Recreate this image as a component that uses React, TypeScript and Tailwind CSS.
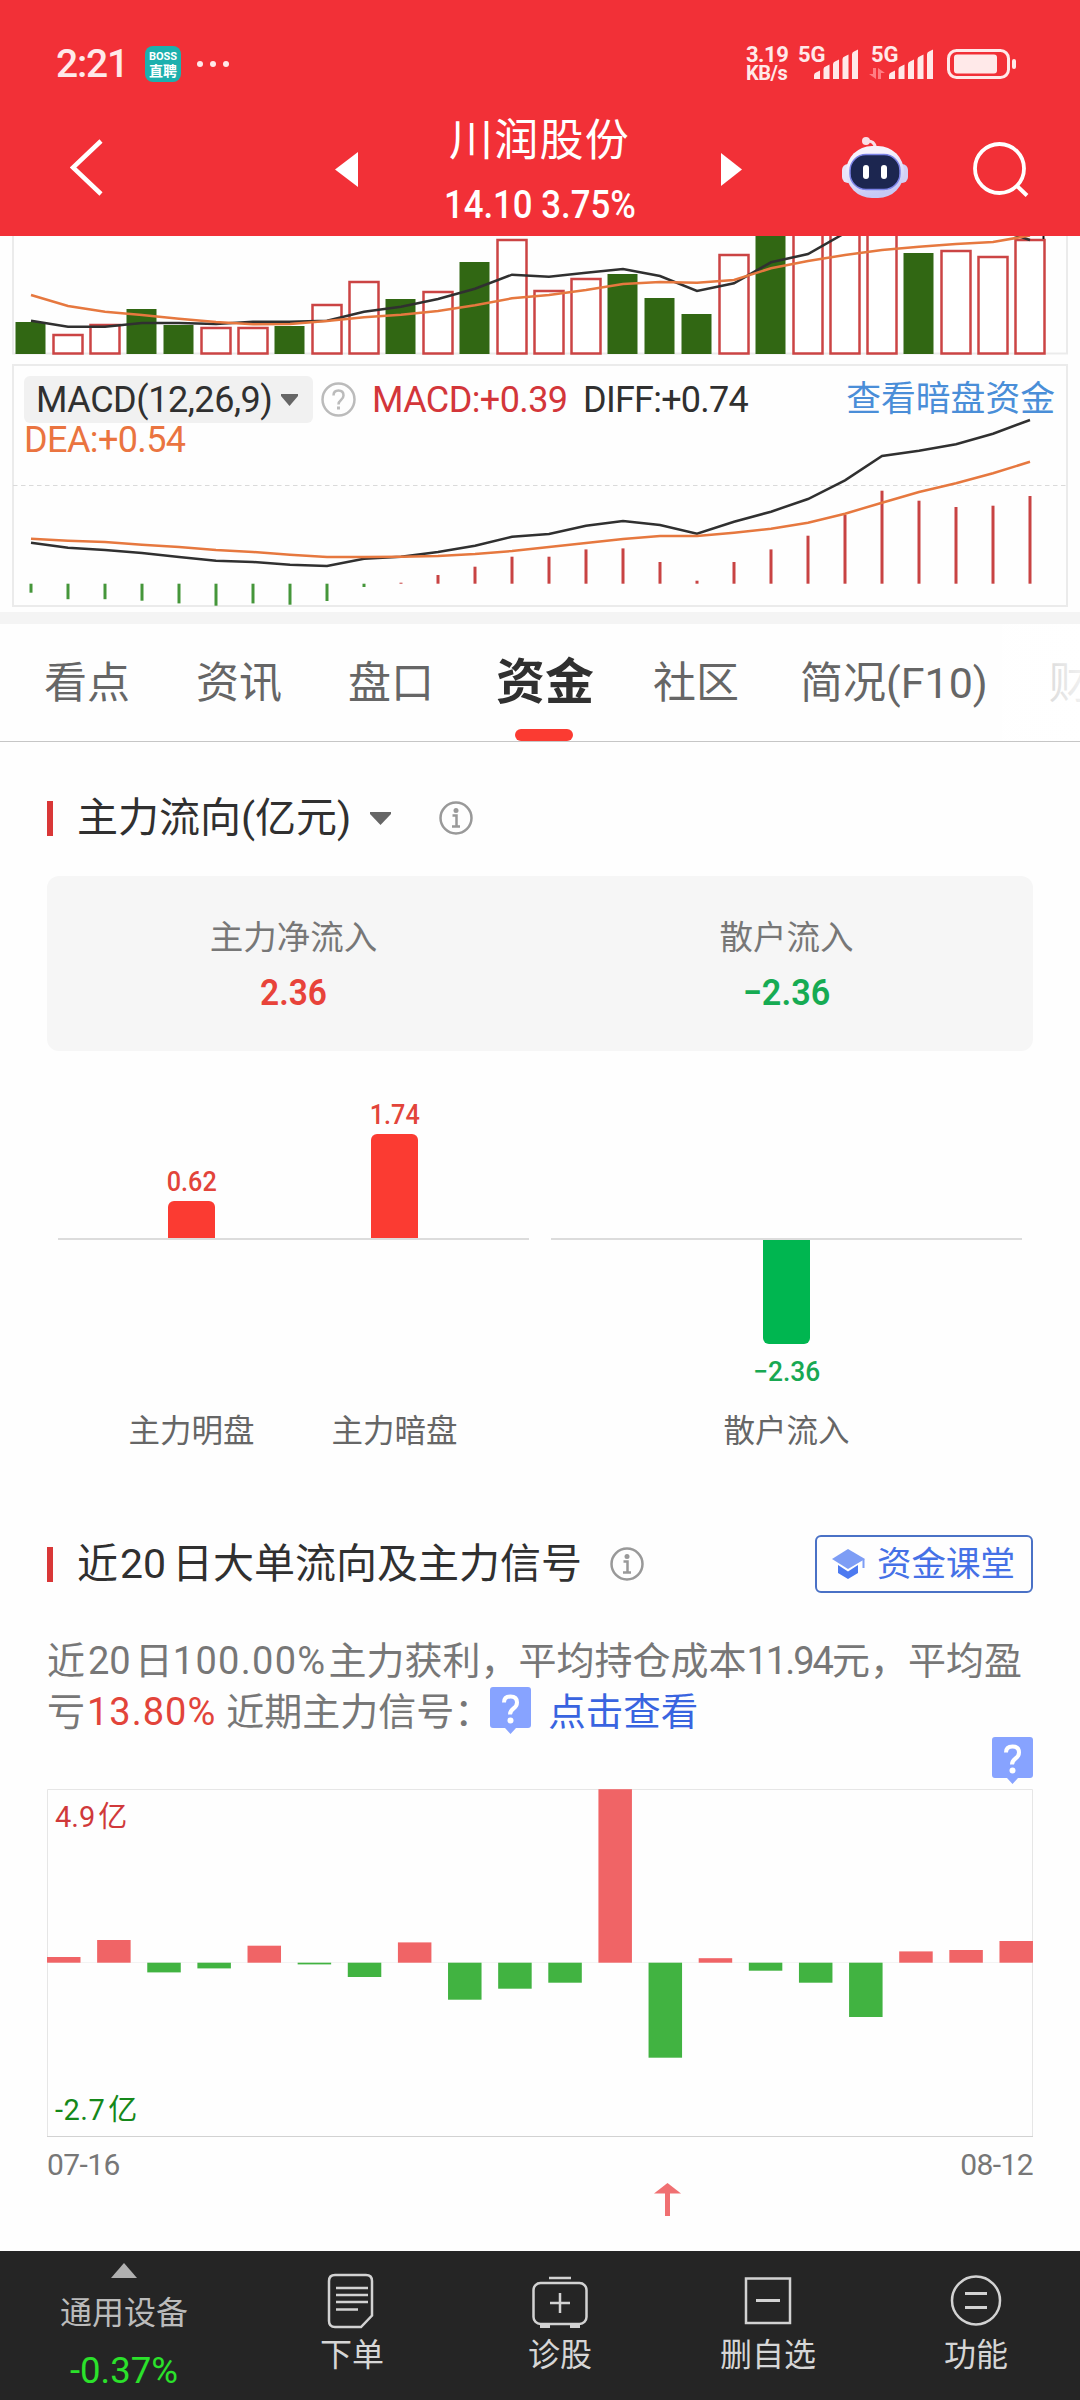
import type { ReactNode } from "react"

const X0 = 31
const STEP = 37

// y of the bar top and whether it is a rising (outlined) bar
const volumes = [
  { y: 322, up: false },
  { y: 335, up: true },
  { y: 325, up: true },
  { y: 309, up: false },
  { y: 325, up: false },
  { y: 328, up: true },
  { y: 328, up: true },
  { y: 326, up: false },
  { y: 305, up: true },
  { y: 282, up: true },
  { y: 299, up: false },
  { y: 292, up: true },
  { y: 262, up: false },
  { y: 240, up: true },
  { y: 291, up: true },
  { y: 279, up: true },
  { y: 274, up: false },
  { y: 298, up: false },
  { y: 314, up: false },
  { y: 255, up: true },
  { y: 220, up: false },
  { y: 220, up: true },
  { y: 220, up: true },
  { y: 220, up: true },
  { y: 253, up: false },
  { y: 251, up: true },
  { y: 257, up: true },
  { y: 240, up: true },
]

const volumeFast = [
  320.7, 326.7, 326.7, 323, 323, 324, 321.7, 321.7, 320.7, 311.7, 306.7, 299, 288.7, 274.7, 276.7, 272.7, 269, 276,
  291, 283.3, 262.3, 254, 233, 210, 205, 215, 228, 240,
]
const volumeSlow = [
  295, 306, 311.7, 315, 318.7, 322, 324.3, 324, 321, 317.3, 314.7, 311, 305.3, 298.3, 295, 290, 284, 282, 282.7, 280,
  268.3, 261, 255, 250, 246.7, 244, 242, 235.5,
]
const diff = [
  542.7, 547.7, 550, 553, 557, 560.7, 562, 564.7, 566, 558.7, 556.7, 552, 545.7, 536.7, 534, 525.7, 521, 525, 533.7,
  521.7, 511.7, 499, 480.3, 456, 450.7, 444.3, 433.7, 420,
]
const dea = [
  538.7, 540.7, 542, 544.7, 547, 550, 552, 554.7, 557, 557, 556.7, 556, 554, 551, 547, 543, 539, 536, 536, 532.7,
  528.7, 522.7, 513.7, 502.7, 492, 483.3, 473.3, 461.7,
]
const macd = [
  -9, -15.5, -15.5, -17, -19.7, -22, -19.7, -21, -17.3, -3.3, 1, 8.7, 17, 27, 27, 34.3, 35.3, 21.7, 3, 21.7, 34.3, 48,
  68.7, 93, 83, 76.7, 78, 87.7,
]

const flows = [
  5.7, 22.7, -9.7, -5.7, 17, -1.7, -14.3, 20.3, -37, -26, -20, 173.5, -95, 4.5, -8, -20, -54.3, 11.3, 12.7, 21.7,
]

const tabs = ["看点", "资讯", "盘口", "资金", "社区", "简况(F10)", "财"]

const toPoints = (values: number[]) => values.map((y, i) => `${X0 + i * STEP},${y}`).join(" ")

function Signal() {
  return (
    <svg width="44" height="30" viewBox="0 0 44 30" fill="#ffe9e9">
      <path d="M0 30V26q0-2 3-3l3-1.500V30z" />
      <path d="M9.500 30V20q0-2 3-3l3-1.500V30z" />
      <path d="M19 30V15q0-2 3-3l3-1.500V30z" />
      <path d="M28.500 30V10q0-2 3-3l3-1.500V30z" />
      <path d="M38 30V5q0-2 3-3l3-1.500V30z" />
    </svg>
  )
}

function StatusBar() {
  return (
    <div className="flex h-[110px] items-center pt-[18px] pl-[56px] text-[#ffe9e9]">
      <div className="w-[89px] text-[39px] leading-none font-medium tracking-[-1.200px]">2:21</div>
      <div className="flex h-9 w-9 flex-col items-center justify-center rounded-lg bg-[#1cb0ae] text-white">
        <span className="text-[11px] leading-[13px] font-bold">BOSS</span>
        <span className="text-[14px] leading-[16px] font-bold">直聘</span>
      </div>
      <div className="ml-4 flex gap-[7px]">
        <i className="h-1.5 w-1.5 rounded-full bg-[#ffe9e9]" />
        <i className="h-1.5 w-1.5 rounded-full bg-[#ffe9e9]" />
        <i className="h-1.5 w-1.5 rounded-full bg-[#ffe9e9]" />
      </div>
      <div className="ml-[517px] w-[52px] text-[22px] leading-[18px] font-bold tracking-[-0.500px]">
        <div>3.19</div>
        <div className="text-[20px]">KB/s</div>
      </div>
      <div className="relative flex h-9 w-[60px] items-end justify-end pb-[3px]">
        <span className="absolute top-0 left-0 text-[22px] leading-[18px] font-bold">5G</span>
        <Signal />
      </div>
      <div className="relative ml-[13px] flex h-9 w-[62px] items-end justify-end pb-[3px]">
        <span className="absolute top-0 left-0 text-[22px] leading-[18px] font-bold">5G</span>
        <svg className="absolute bottom-[3px] left-[-2px]" width="16" height="11" viewBox="0 0 16 11" fill="#ff7d82">
          <path d="M4 0h3v11L0 6h4zM9 11V0l7 5h-4v6z" />
        </svg>
        <Signal />
      </div>
      <svg className="ml-[14px]" width="70" height="30" viewBox="0 0 70 30">
        <rect x="1.500" y="1.500" width="60" height="27" rx="8" fill="none" stroke="#ffe9e9" strokeWidth="3" />
        <rect x="7" y="5.500" width="43" height="19" rx="3" fill="#ffe9e9" />
        <rect x="65" y="10" width="4" height="10" rx="2" fill="#ffe9e9" />
      </svg>
    </div>
  )
}

function Robot() {
  return (
    <svg className="mt-[27px] ml-[100px]" width="66" height="62" viewBox="0 0 66 62">
      <defs>
        <linearGradient id="shell" x1="0" y1="0" x2="0.3" y2="1">
          <stop offset="0.3" stopColor="#f6f2fc" />
          <stop offset="1" stopColor="#c6c9f5" />
        </linearGradient>
      </defs>
      <path d="M24 4q9-1 9.500 8" fill="none" stroke="#f9dfe8" strokeWidth="3" />
      <circle cx="24" cy="4" r="4" fill="#f9dfe8" />
      <rect x="0" y="27" width="12" height="19" rx="6" fill="#e9e4f8" />
      <rect x="54" y="27" width="12" height="19" rx="6" fill="#d3d0f4" />
      <rect x="4" y="9" width="58" height="52" rx="26" fill="url(#shell)" />
      <rect x="8" y="17.500" width="50" height="35" rx="16" fill="#1c2650" stroke="#7c83e6" strokeWidth="1.500" />
      <rect x="21" y="28" width="6" height="14" rx="3" fill="#fff" />
      <rect x="39" y="28" width="6" height="14" rx="3" fill="#fff" />
    </svg>
  )
}

function NavBar() {
  return (
    <div className="flex h-[126px] items-start pl-[70px] text-white">
      <svg className="mt-[28px]" width="33" height="60" viewBox="0 0 33 60">
        <path d="M31 3L3 29.500L31 56" fill="none" stroke="#fff" strokeWidth="4.500" />
      </svg>
      <svg className="mt-[42px] ml-[232px]" width="23" height="35" viewBox="0 0 23 35">
        <path d="M0 17.500L23 0V35z" fill="#fff" />
      </svg>
      <div className="flex w-[363px] flex-col items-center">
        <div className="mt-[2px] text-[44px] leading-[58px] tracking-[1.200px]">川润股份</div>
        <div className="mt-[5px] scale-x-[.915] text-[38px] leading-[60px] font-medium whitespace-nowrap">
          14.10 3.75%
        </div>
      </div>
      <svg className="mt-[43px]" width="21" height="33" viewBox="0 0 21 33">
        <path d="M21 16.500L0 0V33z" fill="#fff" />
      </svg>
      <Robot />
      <svg className="mt-[31px] ml-[65px]" width="56" height="56" viewBox="0 0 56 56" fill="none" stroke="#fff">
        <circle cx="26.500" cy="27.500" r="24.500" strokeWidth="3.800" />
        <path d="M44 45L54 54.500" strokeWidth="4" />
      </svg>
    </div>
  )
}

function StockCharts() {
  return (
    <div className="relative h-[376px]">
      <svg className="block" width="1080" height="376" viewBox="0 236 1080 376">
        <path d="M13 236V353.500H1067V236" fill="none" stroke="#ebebeb" strokeWidth="2" />
        {volumes.map((v, i) =>
          v.up ? (
            <rect
              key={i}
              x={X0 + i * STEP - 14.5}
              y={v.y}
              width="29"
              height={353.5 - v.y}
              fill="#fff"
              stroke="#cb4444"
              strokeWidth="2.500"
            />
          ) : (
            <rect key={i} x={X0 + i * STEP - 15.5} y={v.y} width="30" height={354 - v.y} fill="#316713" />
          ),
        )}
        <polyline points={toPoints(volumeFast)} fill="none" stroke="#303030" strokeWidth="2.500" />
        <polyline points={toPoints(volumeSlow)} fill="none" stroke="#e6783f" strokeWidth="2.500" />
        <path d="M1043.500 236v3" stroke="#111" strokeWidth="2" />

        <rect x="13" y="365" width="1054" height="241" fill="none" stroke="#ebebeb" strokeWidth="2" />
        <path d="M13 485.500H1066" stroke="#dadada" strokeWidth="1" strokeDasharray="4.500 3.500" />
        {macd.map((m, i) => (
          <rect
            key={i}
            x={X0 + i * STEP - 1.5}
            y={m > 0 ? 583.7 - m : 583.7}
            width="3"
            height={Math.abs(m)}
            fill={m > 0 ? "#c84343" : "#45963a"}
          />
        ))}
        <polyline points={toPoints(diff)} fill="none" stroke="#303030" strokeWidth="2.500" />
        <polyline points={toPoints(dea)} fill="none" stroke="#e6783f" strokeWidth="2.500" />
      </svg>

      <div className="absolute top-[140px] left-6 right-[25px] flex h-[47px] items-center text-[36px] leading-none whitespace-nowrap">
        <div className="flex h-[47px] w-[289px] items-center justify-between rounded-md bg-[#f1f1f1] pr-[15px] pl-3 text-[#303030]">
          <span className="tracking-[-0.450px]">MACD(12,26,9)</span>
          <svg width="17" height="12" viewBox="0 0 17 12">
            <path d="M0 0H17V2L8.500 12L0 2z" fill="#666" />
          </svg>
        </div>
        <svg className="ml-2" width="35" height="35" viewBox="0 0 35 35" fill="none" stroke="#bbb">
          <circle cx="17.500" cy="17.500" r="16" strokeWidth="2.500" />
          <path d="M12.500 13.500q0-5 5-5t5 5q0 2.500-2.500 4.500t-2.500 4.500" strokeWidth="2.500" />
          <path d="M17.500 24.500v3" strokeWidth="3" />
        </svg>
        <span className="ml-4 w-[211px] tracking-[-0.600px] text-[#d3363a]">MACD:+0.39</span>
        <span className="tracking-[-0.750px] text-[#303030]">DIFF:+0.74</span>
        <span className="ml-auto text-[34.800px] text-[#4a8ed8]">查看暗盘资金</span>
      </div>
      <div className="absolute top-[185px] left-6 text-[36px] leading-[38px] tracking-[-0.600px] text-[#ea7440]">
        DEA:+0.54
      </div>
    </div>
  )
}

function Tabs() {
  return (
    <div className="h-[130px] border-t-[12px] border-b border-t-[#f4f4f4] border-b-[#c6c6c6]">
      <div className="relative flex h-[117px] items-center overflow-hidden pt-[1px] pl-[44px] text-[43px] whitespace-nowrap text-[#666]">
        {tabs.map((tab) =>
          tab === "资金" ? (
            <div key={tab} className="mr-[59px] -ml-1 text-[49px] font-bold text-[#303030]">
              {tab}
            </div>
          ) : (
            <div key={tab} className={tab === "社区" || tab === "简况(F10)" ? "mr-[61px]" : "mr-[66px]"}>
              {tab}
            </div>
          ),
        )}
        <i className="absolute bottom-0 left-[515px] h-3 w-[58px] rounded-full bg-[#fb3b32]" />
        <div className="absolute top-0 right-0 h-full w-[78px] bg-linear-to-r from-white/60 to-white/90" />
      </div>
    </div>
  )
}

function InfoIcon() {
  return (
    <svg width="34" height="34" viewBox="0 0 34 34" fill="none" stroke="#999">
      <circle cx="17" cy="17" r="15.500" strokeWidth="2.500" />
      <circle cx="17" cy="9.500" r="2.500" fill="#999" stroke="none" />
      <path d="M13.500 14.500h4v11M13 25.500h8" strokeWidth="2.500" />
    </svg>
  )
}

function SectionTitle({ children }: { children: ReactNode }) {
  return (
    <>
      <i className="mr-6 h-[35px] w-1.5 bg-[#d93737]" />
      <h2 className="text-[41px] leading-none whitespace-nowrap text-[#303030]">{children}</h2>
    </>
  )
}

function Bar({ value, label }: { value: number; label: string }) {
  const height = value === 0.62 ? 37 : 104
  return (
    <div className="flex w-[203px] flex-col items-center">
      {value > 0 ? (
        <div className="flex h-[152px] flex-col items-center justify-end">
          <span className="scale-x-[.9] text-[28px] leading-[38px] font-medium text-[#e2443a]">{value}</span>
          <div className="w-[47px] rounded-t-md bg-[#fb3b32]" style={{ height }} />
        </div>
      ) : (
        <div className="mt-[154px] flex h-[168px] flex-col items-center">
          <div className="w-[47px] rounded-b-md bg-[#00b650]" style={{ height }} />
          <span className="mt-[7px] scale-x-[.94] text-[28px] leading-[42px] font-medium text-[#18a852]">−{-value}</span>
        </div>
      )}
      <span className={value > 0 ? "mt-[170px] text-[31.500px] text-[#666]" : "text-[31.500px] text-[#666]"}>{label}</span>
    </div>
  )
}

function MainFlow() {
  return (
    <section className="h-[716px] px-[47px] pt-[52px]">
      <div className="flex h-12 items-center">
        <SectionTitle>主力流向(亿元)</SectionTitle>
        <svg className="ml-[19px]" width="21" height="13" viewBox="0 0 21 13">
          <path d="M0 0H21V2L10.500 13L0 2z" fill="#666" />
        </svg>
        <div className="ml-12">
          <InfoIcon />
        </div>
      </div>

      <div className="mt-[34px] grid h-[175px] grid-cols-2 rounded-xl bg-[#f6f6f6] pt-[36px] text-center">
        <div>
          <div className="text-[33.500px] leading-[52px] text-[#777]">主力净流入</div>
          <div className="scale-x-[.93] text-[36px] leading-[58px] font-semibold text-[#e8433a]">2.36</div>
        </div>
        <div>
          <div className="text-[33.500px] leading-[52px] text-[#777]">散户流入</div>
          <div className="scale-x-[.95] text-[36px] leading-[58px] font-semibold text-[#16ab53]">−2.36</div>
        </div>
      </div>

      <div className="relative mt-[35px] flex h-[380px] leading-[48px]">
        <i className="absolute top-[152px] left-[11px] h-0.5 w-[471px] bg-[#dcdcdc]" />
        <i className="absolute top-[152px] left-[504px] h-0.5 w-[471px] bg-[#dcdcdc]" />
        <div className="flex w-[493px] pl-[43px]">
          <Bar value={0.62} label="主力明盘" />
          <Bar value={1.74} label="主力暗盘" />
        </div>
        <div className="flex w-[493px] justify-center">
          <Bar value={-2.36} label="散户流入" />
        </div>
      </div>
    </section>
  )
}

function QuestionBadge() {
  return (
    <svg width="41" height="47" viewBox="0 0 41 47">
      <path d="M3 0H38Q41 0 41 3V38Q41 41 38 41H26L20.500 47L15 41H3Q0 41 0 38V3Q0 0 3 0z" fill="#87a3ff" />
      <path d="M14 15.500q0-6 6.500-6t6.500 6q0 3.500-3.500 6t-3.500 6" fill="none" stroke="#fff" strokeWidth="4" />
      <circle cx="20.500" cy="33.500" r="3" fill="#fff" />
    </svg>
  )
}

function FlowChart() {
  return (
    <div className="relative mt-[51px] h-[349px]">
      <svg className="block" width="986" height="349" viewBox="0 0 986 349">
        <path d="M0.500 348V0.500H985.500V348" fill="none" stroke="#e6e6e6" />
        <path d="M0 173.500H986" stroke="#f3f3f3" />
        <path d="M0 347.500H986" stroke="#d2d2d2" />
        {flows.map((f, i) => (
          <rect
            key={i}
            x={i * 50.13}
            y={f > 0 ? 173.7 - f : 173.7}
            width="33.500"
            height={Math.abs(f)}
            fill={f > 0 ? "#f06466" : "#41b341"}
          />
        ))}
      </svg>
      <div className="absolute top-[10px] left-2 text-[29px] leading-[36px] text-[#d0393a]">
        4.9<span className="ml-[3px]">亿</span>
      </div>
      <div className="absolute top-[303px] left-2 text-[29px] leading-[36px] tracking-[0.500px] text-[#15881a]">
        -2.7<span className="ml-[3px]">亿</span>
      </div>
      <div className="absolute -top-[52px] right-0">
        <QuestionBadge />
      </div>
    </div>
  )
}

function OrderFlow() {
  return (
    <section className="h-[793px] px-[47px] pt-[77px]">
      <div className="flex h-[58px] items-center">
        <SectionTitle>
          近<span className="mr-[6px] ml-[2px]">20</span>日大单流向及主力信号
        </SectionTitle>
        <div className="ml-7">
          <InfoIcon />
        </div>
        <div className="ml-auto flex h-[58px] w-[218px] items-center rounded-md border-2 border-[#4a71c6] pl-[15px] text-[34.500px] leading-none whitespace-nowrap text-[#4571e6]">
          <svg className="mr-[12px]" width="33" height="30" viewBox="0 0 33 30">
            <path d="M16 0L33 10L16 20L0 10z" fill="#7d9df5" />
            <path d="M6 16L16 22.500L26 16V24L16 30L6 24z" fill="#4d7af0" />
            <path d="M31.500 10V19" stroke="#7d9df5" strokeWidth="2" />
          </svg>
          资金课堂
        </div>
      </div>

      <div className="mt-[43px] text-[38px] leading-[51px] whitespace-nowrap text-[#777]">
        <div>
          近<span className="mr-[4px] ml-[3px]">20</span>日
          <span className="mr-[2px] tracking-[1.300px]">100.00%</span>
          主力获利，平均持仓成本<span className="tracking-[-2px]">11.94</span>元，平均盈
        </div>
        <div className="flex">
          亏<span className="mr-[10px] ml-[2px] tracking-[1px] text-[#e2443a]">13.80%</span>近期主力信号：
          <div className="mr-[17px] ml-[-2px]">
            <QuestionBadge />
          </div>
          <span className="text-[37.500px] text-[#3964e0]">点击查看</span>
        </div>
      </div>

      <FlowChart />

      <div className="mt-[7px] flex justify-between text-[30px] leading-[40px] tracking-[-0.600px] text-[#777]">
        <span>07-16</span>
        <span>08-12</span>
      </div>
      <svg className="-mt-[2px] ml-[607px]" width="27" height="33" viewBox="0 0 27 33" fill="#f07072">
        <path d="M13.500 0L27 10.500H0z" />
        <path d="M11 9h5v24h-5z" />
      </svg>
    </section>
  )
}

const actions = [
  {
    label: "下单",
    icon: (
      <>
        <path d="M11 4H42Q48 4 48 10V44.500L37 56H11Q5 56 5 50V10Q5 4 11 4z" />
        <path d="M12 17H44M12 24H44M12 31H44M12 38.500H34" />
      </>
    ),
  },
  {
    label: "诊股",
    icon: (
      <>
        <rect x="1.500" y="12" width="53" height="41" rx="7" />
        <path d="M17 7H39M28 22V42M18 32H38" />
        <path d="M8 55H18M38 55H48" strokeWidth="4" />
      </>
    ),
  },
  {
    label: "删自选",
    icon: (
      <>
        <rect x="6" y="7.500" width="44" height="44.500" />
        <path d="M16 29.500H40" strokeWidth="3" />
      </>
    ),
  },
  {
    label: "功能",
    icon: (
      <>
        <circle cx="28" cy="29.500" r="24" />
        <path d="M17 22.500H39M17 36.500H39" strokeWidth="3" />
      </>
    ),
  },
]

function BottomBar() {
  return (
    <div className="flex h-[149px] bg-[#252525] text-[32px] text-[#d6d6d6]">
      <div className="flex w-[248px] flex-col items-center pt-3 text-[#bbb]">
        <svg width="26" height="15" viewBox="0 0 26 15">
          <path d="M13 0L26 15H0z" fill="#b0b0b0" />
        </svg>
        <div className="mt-[15px] leading-[40px]">通用设备</div>
        <div className="mt-[18px] text-[36.500px] leading-[40px] text-[#2be22b]">-0.37%</div>
      </div>
      {actions.map((action) => (
        <div key={action.label} className="flex w-[208px] flex-col items-center pt-5">
          <svg width="56" height="58" viewBox="0 0 56 58" fill="none" stroke="#d2d2d2" strokeWidth="2.500">
            {action.icon}
          </svg>
          <div className="mt-[6px] leading-[40px]">{action.label}</div>
        </div>
      ))}
    </div>
  )
}

export default function App() {
  return (
    <div className="h-[2400px] w-[1080px] overflow-hidden bg-[#fefefe] font-[Roboto,'Noto_Sans_CJK_SC',sans-serif]">
      <header className="h-[236px] bg-[#f23037]">
        <StatusBar />
        <NavBar />
      </header>
      <StockCharts />
      <Tabs />
      <MainFlow />
      <OrderFlow />
      <BottomBar />
    </div>
  )
}
